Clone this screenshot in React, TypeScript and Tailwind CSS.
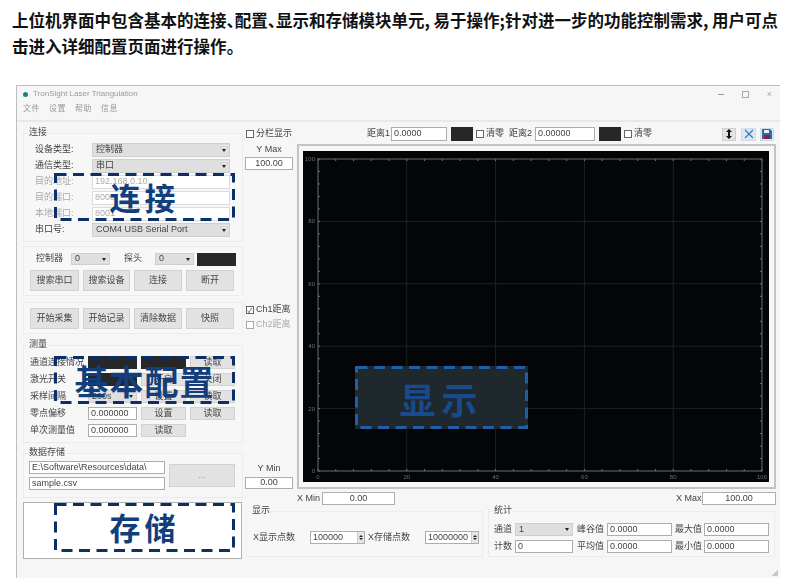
import React from 'react';

const Btn = ({ label, className = '' }: { label: string; className?: string }) => (
  <div className={`flex items-center justify-center bg-[#e2e2e2] border border-[#d2d2d2] text-[9px] text-[#444] ${className}`}>{label}</div>
);

const Combo = ({ label, className = '', muted = false }: { label: string; className?: string; muted?: boolean }) => (
  <div className={`flex items-center justify-between bg-[#dfdfdf] border border-[#cfcfcf] pl-[3px] pr-[3px] text-[9px] text-[#444] ${className}`}>
    <span>{label}</span>
    <span className={`w-0 h-0 border-x-[2px] border-x-transparent border-t-[3px] ${muted ? 'border-t-[#777]' : 'border-t-[#222]'}`} />
  </div>
);

const Field = ({ value, className = '', center = false, muted = false }: { value: string; className?: string; center?: boolean; muted?: boolean }) => (
  <div className={`flex items-center bg-white border border-[#adadad] px-[2px] text-[9px] ${muted ? 'text-[#aaa] border-[#dcdcdc]' : 'text-[#444]'} ${center ? 'justify-center' : ''} ${className}`}>{value}</div>
);

const Check = ({ label, checked = false, muted = false, className = '' }: { label: string; checked?: boolean; muted?: boolean; className?: string }) => (
  <div className={`flex items-center gap-[2px] text-[9px] whitespace-nowrap ${muted ? 'text-[#aaa]' : 'text-[#444]'} ${className}`}>
    <span className={`flex items-center justify-center w-[8px] h-[8px] bg-white border border-[#666] text-[7px] leading-none ${muted ? 'border-[#aaa]' : ''}`}>{checked ? '✓' : ''}</span>
    {label}
  </div>
);

const Group = ({ title, className = '', children }: { title?: string; className?: string; children: React.ReactNode }) => (
  <div className={`relative border border-[#ececec] bg-[#f7f7f7] ${className}`}>
    {title && <span className="absolute -top-[8px] left-[4px] px-[1px] bg-[#f7f7f7] text-[9px] leading-[12px] text-[#444]">{title}</span>}
    {children}
  </div>
);

const DashBox = ({ text, className, stroke = '#0b2f66', textClass }: { text: string; className: string; stroke?: string; textClass: string }) => (
  <div className={`absolute flex items-center justify-center ${className}`}>
    <svg className="absolute inset-0 w-full h-full" fill="none">
      <rect x="1.5" y="1.5" width="calc(100% - 3px)" height="calc(100% - 3px)" stroke={stroke} strokeWidth="3" strokeDasharray="11 6.5" />
    </svg>
    <span className={`relative font-bold whitespace-nowrap font-['Noto_Sans_CJK_SC',sans-serif] ${textClass}`}>{text}</span>
  </div>
);

const ConnectRow = ({ label, muted = false, children }: { label: string; muted?: boolean; children: React.ReactNode }) => (
  <div className="flex items-center h-[14px]">
    <span className={`w-[57px] text-[9px] ${muted ? 'text-[#aaa]' : 'text-[#444]'}`}>{label}</span>
    {children}
  </div>
);

const MeasureRow = ({ label, children }: { label: string; children: React.ReactNode }) => (
  <div className="flex items-center gap-[4px] h-[13px]">
    <span className="w-[54px] text-[9px] text-[#444] whitespace-nowrap">{label}</span>
    {children}
  </div>
);

const Spin = ({ value, className = '' }: { value: string; className?: string }) => (
  <div className={`flex items-center justify-between h-[13px] bg-white border border-[#adadad] pl-[2px] text-[9px] text-[#444] ${className}`}>
    {value}
    <span className="flex flex-col items-center justify-center gap-[1px] w-[7px] h-full bg-[#e6e6e6] border-l border-[#ccc]">
      <span className="w-0 h-0 border-x-[2px] border-x-transparent border-b-[2px] border-b-[#222]" />
      <span className="w-0 h-0 border-x-[2px] border-x-transparent border-t-[2px] border-t-[#222]" />
    </span>
  </div>
);

const Plot = () => {
  const x0 = 15;
  const x1 = 459;
  const y0 = 320;
  const y1 = 8;
  const steps = [0, 20, 40, 60, 80, 100];
  const minor = Array.from({ length: 26 }, (_, i) => i * 4);
  const px = (v: number) => x0 + ((x1 - x0) * v) / 100;
  const py = (v: number) => y0 - ((y0 - y1) * v) / 100;
  return (
    <svg className="block w-[466px] h-[331px] bg-[#030507]" viewBox="0 0 466 331">
      {steps.map((v) => (
        <g key={v}>
          <line x1={px(v)} x2={px(v)} y1={y1} y2={y0} stroke="#1d2326" />
          <line x1={x0} x2={x1} y1={py(v)} y2={py(v)} stroke="#1d2326" />
          <text x={px(v)} y={y0 + 8} fontSize="6" fill="#6b7070" textAnchor="middle">{v}</text>
          <text x={x0 - 3} y={py(v) + 2} fontSize="6" fill="#6b7070" textAnchor="end">{v}</text>
        </g>
      ))}
      {minor.map((v) => (
        <g key={v} stroke="#6d7878">
          <line x1={px(v)} x2={px(v)} y1={y1} y2={y1 + 2} />
          <line x1={px(v)} x2={px(v)} y1={y0} y2={y0 - 2} />
          <line x1={x0} x2={x0 + 2} y1={py(v)} y2={py(v)} />
          <line x1={x1} x2={x1 - 2} y1={py(v)} y2={py(v)} />
        </g>
      ))}
      <rect x={x0} y={y1} width={x1 - x0} height={y0 - y1} fill="none" stroke="#59646a" />
    </svg>
  );
};

export default function App() {
  return (
    <div className="relative w-[790px] h-[582px] overflow-hidden bg-white font-['Liberation_Sans','Noto_Sans_CJK_SC',sans-serif]">
      <div className="h-[85px] pl-[12px] pt-[7px] text-[16.5px] leading-[26px] font-bold text-[#111] whitespace-nowrap font-['Noto_Sans_CJK_SC',sans-serif] [font-feature-settings:'palt']">
        <p>上位机界面中包含基本的连接、配置、显示和存储模块单元, 易于操作;针对进一步的功能控制需求, 用户可点</p>
        <p>击进入详细配置页面进行操作。</p>
      </div>

      <div className="relative ml-[16px] w-[764px] h-[493px] bg-[#f6f6f6] border-t border-l border-[#bdbdbd] blur-[0.3px]">
        <div className="flex items-center justify-between h-[16px] pl-[6px] pr-[8px]">
          <div className="flex items-center gap-[5px] text-[8px] text-[#999]">
            <span className="w-[5px] h-[5px] rounded-full bg-[#1f7f86]" />
            TronSight Laser Triangulation
          </div>
          <div className="flex items-center gap-[18px] text-[#aaa]">
            <span className="w-[6px] h-px bg-[#999]" />
            <span className="w-[7px] h-[7px] border border-[#aaa]" />
            <span className="text-[9px] leading-none">×</span>
          </div>
        </div>
        <div className="flex gap-[9px] h-[14px] pl-[6px] items-center text-[8px] tracking-[0.5px] text-[#999]">
          <span>文件</span>
          <span>设置</span>
          <span>帮助</span>
          <span>信息</span>
        </div>
        <div className="h-[2px] mt-[4px] bg-[#e8e8e8]" />

        <div className="flex pl-[6px]">
          {/* left column */}
          <div className="w-[220px] pt-[11px]">
            <Group title="连接" className="h-[109px] pl-[11px] pt-[9px] flex flex-col gap-[2px]">
              <ConnectRow label="设备类型:"><Combo label="控制器" className="w-[138px] h-[14px]" /></ConnectRow>
              <ConnectRow label="通信类型:"><Combo label="串口" className="w-[138px] h-[14px]" /></ConnectRow>
              <ConnectRow label="目的地址:" muted><Field muted value="192.168.0.10" className="w-[138px] h-[14px]" /></ConnectRow>
              <ConnectRow label="目的端口:" muted><Field muted value="8000" className="w-[138px] h-[14px]" /></ConnectRow>
              <ConnectRow label="本地端口:" muted><Field muted value="8001" className="w-[138px] h-[14px]" /></ConnectRow>
              <ConnectRow label="串口号:"><Combo label="COM4 USB Serial Port" className="w-[138px] h-[14px]" /></ConnectRow>
            </Group>

            <Group className="mt-[4px] h-[50px] pl-[6px] pt-[5px]">
              <div className="flex items-center h-[14px] text-[9px] text-[#444]">
                <span className="w-[41px] pl-[6px]">控制器</span>
                <Combo label="0" className="w-[39px] h-[12px]" />
                <span className="ml-[14px] w-[31px]">探头</span>
                <Combo label="0" className="w-[39px] h-[12px]" />
                <span className="ml-[3px] w-[39px] h-[13px] bg-[#272727]" />
              </div>
              <div className="flex gap-[4px] mt-[4px]">
                <Btn label="搜索串口" className="w-[49px] h-[21px]" />
                <Btn label="搜索设备" className="w-[47px] h-[21px]" />
                <Btn label="连接" className="w-[48px] h-[21px]" />
                <Btn label="断开" className="w-[48px] h-[21px]" />
              </div>
            </Group>

            <Group className="mt-[6px] h-[32px] pl-[6px] pt-[5px]">
              <div className="flex gap-[4px]">
                <Btn label="开始采集" className="w-[49px] h-[21px]" />
                <Btn label="开始记录" className="w-[47px] h-[21px]" />
                <Btn label="清除数据" className="w-[48px] h-[21px]" />
                <Btn label="快照" className="w-[48px] h-[21px]" />
              </div>
            </Group>

            <Group title="测量" className="mt-[11px] h-[98px] pl-[6px] pt-[10px] flex flex-col gap-[4px]">
              <MeasureRow label="通道连接情况">
                <span className="w-[49px] h-[13px] bg-[#272727]" />
                <span className="w-[45px] h-[13px] bg-[#272727]" />
                <Btn label="读取" className="w-[45px] h-[13px]" />
              </MeasureRow>
              <MeasureRow label="激光开关">
                <span className="w-[49px] h-[13px] bg-[#272727]" />
                <Btn label="开启" className="w-[45px] h-[13px]" />
                <Btn label="关闭" className="w-[45px] h-[13px]" />
              </MeasureRow>
              <MeasureRow label="采样间隔">
                <Combo label="200s" className="w-[49px] h-[13px]" />
                <Btn label="设置" className="w-[45px] h-[13px]" />
                <Btn label="读取" className="w-[45px] h-[13px]" />
              </MeasureRow>
              <MeasureRow label="零点偏移">
                <Field value="0.000000" className="w-[49px] h-[13px]" />
                <Btn label="设置" className="w-[45px] h-[13px]" />
                <Btn label="读取" className="w-[45px] h-[13px]" />
              </MeasureRow>
              <MeasureRow label="单次测量值">
                <Field value="0.000000" className="w-[49px] h-[13px]" />
                <Btn label="读取" className="w-[45px] h-[13px]" />
              </MeasureRow>
            </Group>

            <Group title="数据存储" className="mt-[10px] h-[45px] pl-[5px] pt-[9px] flex items-center gap-[4px]">
              <div className="flex flex-col gap-[3px] -mt-[9px]">
                <Field value="E:\Software\Resources\data\" className="w-[136px] h-[13px]" />
                <Field value="sample.csv" className="w-[136px] h-[13px]" />
              </div>
              <Btn label="..." className="w-[66px] h-[23px] -mt-[9px] text-[#999]" />
            </Group>

            <div className="mt-[4px] w-[219px] h-[57px] bg-white border border-[#b0b0b0]" />
          </div>

          {/* right side */}
          <div className="ml-[2px] w-[531px]">
            <div className="flex">
              <div className="w-[52px] flex flex-col">
                <Check label="分栏显示" className="h-[14px] mt-[5px] ml-[1px]" />
                <span className="mt-[2px] pr-[4px] text-center text-[9px] leading-[12px] text-[#444]">Y Max</span>
                <Field center value="100.00" className="w-[48px] h-[13px] mt-[2px]" />
                <Check checked label="Ch1距离" className="h-[14px] mt-[133px] ml-[1px]" />
                <Check muted label="Ch2距离" className="h-[14px] mt-[1px] ml-[1px]" />
                <span className="mt-[130px] pr-[4px] text-center text-[9px] leading-[12px] text-[#444]">Y Min</span>
                <Field center value="0.00" className="w-[48px] h-[12px] mt-[3px]" />
              </div>

              <div className="w-[479px] pt-[5px]">
                <div className="flex items-center h-[14px] text-[9px] text-[#444]">
                  <span className="ml-[70px] w-[24px]">距离1</span>
                  <Field value="0.0000" className="w-[56px] h-[14px]" />
                  <span className="ml-[4px] w-[22px] h-[14px] bg-[#272727]" />
                  <Check label="清零" className="ml-[3px] w-[33px]" />
                  <span className="w-[26px]">距离2</span>
                  <Field value="0.00000" className="w-[60px] h-[14px]" />
                  <span className="ml-[4px] w-[22px] h-[14px] bg-[#272727]" />
                  <Check label="清零" className="ml-[3px] w-[98px]" />
                  <div className="flex items-center justify-center w-[14px] h-[13px] bg-[#e2e2e2] border border-[#cfcfcf]">
                    <svg width="6" height="10" viewBox="0 0 6 10" fill="#111">
                      <path d="M3 0 6 3H4v4h2L3 10 0 7h2V3H0z" />
                    </svg>
                  </div>
                  <div className="ml-[5px] flex items-center justify-center w-[15px] h-[13px] bg-[#dbe8f3] border border-[#cfdbe5]">
                    <svg width="10" height="10" viewBox="0 0 10 10" stroke="#3b78b8" strokeWidth="1.2">
                      <path d="M1 1 9 9M9 1 1 9" />
                    </svg>
                  </div>
                  <div className="ml-[4px] flex items-center justify-center w-[14px] h-[13px] bg-[#dbe8f3] border border-[#cfdbe5]">
                    <svg width="10" height="10" viewBox="0 0 10 10">
                      <path d="M0 0h8l2 2v8H0z" fill="#2f6aa8" />
                      <path d="M2 1h5v3H2z" fill="#e8eef4" />
                      <path d="M2 6h6v4H2z" fill="#8a1f3a" />
                    </svg>
                  </div>
                </div>
                <div className="mt-[3px] h-[345px] bg-[#f7f7f7] border-2 border-[#c4c4c4] pl-[4px] pt-[5px]">
                  <Plot />
                </div>
                <div className="flex items-center justify-between mt-[3px] h-[13px] text-[9px] text-[#444]">
                  <div className="flex items-center">
                    <span className="w-[25px]">X Min</span>
                    <Field center value="0.00" className="w-[73px] h-[13px]" />
                  </div>
                  <div className="flex items-center">
                    <span className="w-[26px]">X Max</span>
                    <Field center value="100.00" className="w-[74px] h-[13px]" />
                  </div>
                </div>
              </div>
            </div>

            <div className="flex mt-[6px] ml-[1px] gap-[5px]">
              <Group title="显示" className="w-[237px] h-[46px] pl-[6px] flex items-center text-[9px] text-[#444]">
                <span className="w-[57px] mt-[7px]">X显示点数</span>
                <Spin value="100000" className="w-[55px] mt-[7px]" />
                <span className="ml-[3px] w-[57px] mt-[7px]">X存储点数</span>
                <Spin value="10000000" className="w-[54px] mt-[7px]" />
              </Group>
              <Group title="统计" className="w-[287px] h-[46px] pl-[5px] pt-[11px] flex flex-col gap-[4px] text-[9px] text-[#444]">
                <div className="flex items-center h-[13px]">
                  <span className="w-[21px]">通道</span>
                  <Combo label="1" className="w-[58px] h-[13px]" />
                  <span className="ml-[4px] w-[30px]">峰谷值</span>
                  <Field value="0.0000" className="w-[65px] h-[13px]" />
                  <span className="ml-[3px] w-[29px]">最大值</span>
                  <Field value="0.0000" className="w-[65px] h-[13px]" />
                </div>
                <div className="flex items-center h-[13px]">
                  <span className="w-[21px]">计数</span>
                  <Field value="0" className="w-[58px] h-[13px]" />
                  <span className="ml-[4px] w-[30px]">平均值</span>
                  <Field value="0.0000" className="w-[65px] h-[13px]" />
                  <span className="ml-[3px] w-[29px]">最小值</span>
                  <Field value="0.0000" className="w-[65px] h-[13px]" />
                </div>
              </Group>
            </div>
          </div>
        </div>
        <span className="absolute right-[2px] bottom-[2px] w-[6px] h-[6px] bg-[linear-gradient(135deg,transparent_50%,#c8c8c8_50%)]" />
      </div>

      <DashBox text="连接" className="left-[54px] top-[173px] w-[181px] h-[48px]" textClass="text-[31px] tracking-[4px] text-[#123f7c]" />
      <DashBox text="基本配置" className="left-[54px] top-[356px] w-[181px] h-[48px]" textClass="text-[34px] tracking-[1px] text-[#123f7c]" />
      <DashBox text="存储" className="left-[54px] top-[503px] w-[181px] h-[49px]" textClass="text-[31px] tracking-[4px] text-[#123f7c]" />
      <DashBox text="显示" className="left-[355px] top-[366px] w-[173px] h-[63px] bg-[#1f282c]" stroke="#1f5fa8" textClass="text-[36px] tracking-[6px] text-[#184a8c]" />
    </div>
  );
}
